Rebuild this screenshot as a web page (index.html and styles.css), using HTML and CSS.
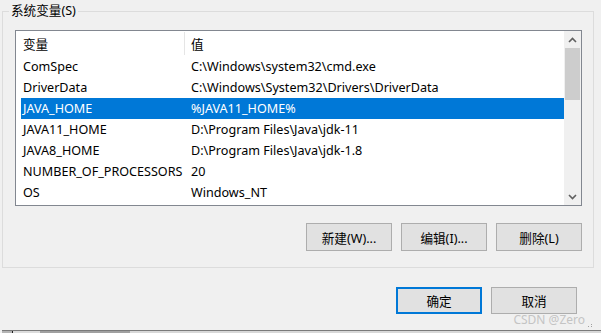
FILE: index.html
```html
<!DOCTYPE html>
<html lang="zh-CN">
<head>
  <meta charset="UTF-8">
  <title>系统变量</title>
  <link rel="stylesheet" href="styles.css">
</head>
<body>

  <div class="group">
    <div class="group-title">系统变量(S)</div>

    <div class="listbox">
      <div class="list">
        <div class="list-head">
          <div class="cell name">变量</div>
          <div class="cell value sep">值</div>
        </div>
        <div class="row"><div class="cell name">ComSpec</div><div class="cell value">C:\Windows\system32\cmd.exe</div></div>
        <div class="row"><div class="cell name">DriverData</div><div class="cell value">C:\Windows\System32\Drivers\DriverData</div></div>
        <div class="row selected"><div class="cell name">JAVA_HOME</div><div class="cell value">%JAVA11_HOME%</div></div>
        <div class="row"><div class="cell name">JAVA11_HOME</div><div class="cell value">D:\Program Files\Java\jdk-11</div></div>
        <div class="row"><div class="cell name">JAVA8_HOME</div><div class="cell value">D:\Program Files\Java\jdk-1.8</div></div>
        <div class="row"><div class="cell name">NUMBER_OF_PROCESSORS</div><div class="cell value">20</div></div>
        <div class="row"><div class="cell name">OS</div><div class="cell value">Windows_NT</div></div>
      </div>

      <!-- barra de desplazamiento -->
      <div class="scrollbar">
        <div class="arrow">
          <svg width="9" height="6" viewBox="0 0 9 6"><polyline points="1,5 4.5,1.5 8,5" fill="none" stroke="#606060" stroke-width="1.6"/></svg>
        </div>
        <div class="thumb"></div>
        <div class="track"></div>
        <div class="arrow">
          <svg width="9" height="6" viewBox="0 0 9 6"><polyline points="1,1 4.5,4.5 8,1" fill="none" stroke="#606060" stroke-width="1.6"/></svg>
        </div>
      </div>
    </div>

    <div class="actions">
      <button class="btn">新建(W)...</button>
      <button class="btn">编辑(I)...</button>
      <button class="btn">删除(L)</button>
    </div>
  </div>

  <div class="dialog-actions">
    <button class="btn btn-small default">确定</button>
    <button class="btn btn-small">取消</button>
  </div>

  <div class="footer"></div>
  <div class="watermark">CSDN @Zero</div>
  <svg class="grip" width="5" height="4" viewBox="0 0 5 4">
    <rect x="0" y="2" width="1" height="1" fill="#a0a0a0"/>
    <rect x="3" y="2" width="1" height="1" fill="#a0a0a0"/>
    <rect x="3" y="0" width="1" height="1" fill="#a0a0a0"/>
  </svg>

</body>
</html>
```

FILE: styles.css
```css
html, body {
  margin: 0;
  height: 333px;
  overflow: hidden;
}

body {
  padding-left: 2px;
  box-sizing: border-box;
  background-color: #f0f0f0;
  color: #000;
  font-family: "Noto Sans", "Noto Sans CJK SC", sans-serif;
  font-size: 12.6px;
  display: flex;
  flex-direction: column;
  position: relative;
}

.group {
  margin-top: 11px;
  width: 592px;
  box-sizing: border-box;
  border: 1px solid #dcdcdc;
  padding: 0 11px 16px 12px;
}

.group-title {
  width: fit-content;
  margin: -9px 0 0 -6px;
  padding: 0 2px;
  line-height: 16px;
  background-color: #f0f0f0;
}

.listbox {
  margin-top: 11px;
  height: 176px;
  box-sizing: border-box;
  border: 1px solid #828790;
  background: white;
  display: flex;
}

.list {
  flex: 1;
  padding-left: 5px;
}

.list-head, .row {
  display: flex;
}

.list-head {
  height: 25px;
  align-items: center;
}

.row {
  height: 21px;
  align-items: center;
}

.cell {
  white-space: nowrap;
}

.cell.name {
  width: 161px;
  padding-left: 2px;
}

.cell.value {
  padding-left: 7px;
}

.list-head .sep {
  align-self: stretch;
  display: flex;
  align-items: center;
  border-left: 1px solid #e5e5e5;
  margin: 1px 0 1px 0;
  padding-left: 6px;
}

.row.selected {
  background-color: #0078d7;
  color: white;
}

.scrollbar {
  width: 17px;
  background-color: #f0f0f0;
  display: flex;
  flex-direction: column;
}

.arrow {
  height: 17px;
  display: flex;
  align-items: center;
  justify-content: center;
}

.thumb {
  height: 52px;
  margin: 0 1px;
  background-color: #cdcdcd;
}

.track {
  flex: 1;
}

.actions {
  margin-top: 17px;
  display: flex;
  justify-content: flex-end;
  gap: 9px;
}

.btn {
  width: 86px;
  height: 28px;
  box-sizing: border-box;
  padding: 0;
  border: 1px solid #adadad;
  background-color: #e1e1e1;
  font-family: "Noto Sans", "Noto Sans CJK SC", sans-serif;
  font-size: 12.6px;
  color: #000;
}

.btn-small {
  height: 27px;
}

.btn.default {
  border: 2px solid #0078d7;
}

.dialog-actions {
  margin-top: 19px;
  padding-right: 24px;
  display: flex;
  justify-content: flex-end;
  gap: 9px;
}

.footer {
  margin-top: auto;
  height: 2px;
  border-top: 1px solid #7a7a7a;
  background: linear-gradient(to right, #b4b4b4 0 10px, #202020 10px 11px, #dcdcdc 11px 38px, #a0a0a0 38px 128px, #d8d8d8 128px);
}

.watermark {
  position: absolute;
  right: 16px;
  bottom: 5px;
  color: #c4c4c4;
  font-size: 12px;
}

.grip {
  position: absolute;
  right: 8px;
  bottom: 5px;
}
```
